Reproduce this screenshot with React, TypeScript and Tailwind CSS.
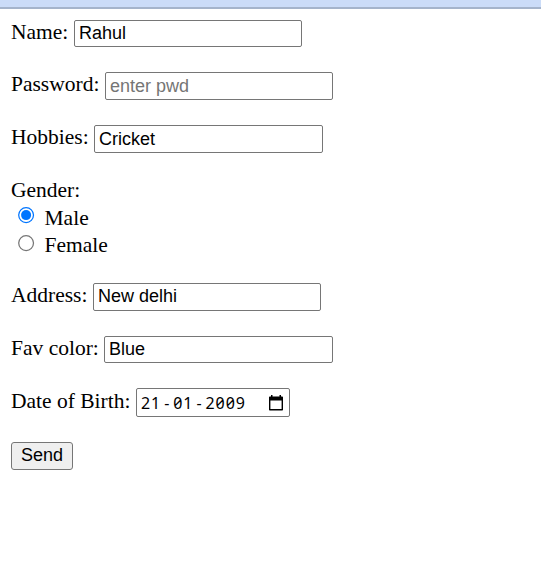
import React from 'react';

type FieldProps = {
  label: string;
  labelClass: string;
  boxClass: string;
  value?: string;
  placeholder?: string;
};

const boxBase =
  "block shrink-0 rounded-[2px] border border-[#767676] bg-white pl-1 font-['Liberation_Sans',Arial,sans-serif] text-[18px] leading-[24px] text-black outline-none placeholder:text-[#757575] placeholder:opacity-100";

function Field({ label, labelClass, boxClass, value, placeholder }: FieldProps) {
  return (
    <label className="flex h-[28px] items-start">
      <span className={`shrink-0 whitespace-nowrap leading-[24px] ${labelClass}`}>{label}</span>
      <input className={`${boxBase} ${boxClass}`} defaultValue={value} placeholder={placeholder} />
    </label>
  );
}

function Radio({ label, checked }: { label: string; checked?: boolean }) {
  return (
    <div className="flex h-[27.5px] items-start pl-[7px]">
      <svg className="mt-[1.5px] shrink-0" width="17" height="17" viewBox="0 0 17 17">
        <circle cx="8.1" cy="8.1" r="7.4" fill="white" stroke={checked ? '#0075ff' : '#767676'} strokeWidth="1.25" />
        {checked && <circle cx="8.1" cy="8.1" r="5" fill="#0075ff" />}
      </svg>
      <span className="ml-[9.5px] leading-[24px]">{label}</span>
    </div>
  );
}

function CalendarIcon() {
  return (
    <svg width="14" height="16" viewBox="0 0 14 16" className="mr-[6px]">
      <path fill="#000" d="M2 0h1.5v1.5h7V0H12v1.5h1.2q.8 0 .8.8v12.4q0 .8-.8.8H.8q-.8 0-.8-.8V2.3q0-.8.8-.8H2zM1.4 5.5v8.6h11.2V5.5z" />
    </svg>
  );
}

export default function App() {
  return (
    <main className="h-[562px] w-[541px] overflow-hidden bg-white font-['Liberation_Serif','Times_New_Roman',serif] text-[21.5px] text-black">
      <div className="h-[9px] border-b-2 border-[#a5b4cb] bg-[#cbdcf8]" />
      <form className="flex flex-col pl-[11px] pt-[11px]" onSubmit={(e) => e.preventDefault()}>
        <Field label="Name:" value="Rahul" labelClass="w-[63px]" boxClass="h-[27px] w-[228px] pb-px" />
        <div className="h-[24px]" />
        <Field label="Password:" placeholder="enter pwd" labelClass="w-[94px]" boxClass="h-[28px] w-[228px]" />
        <div className="h-[25px]" />
        <Field label="Hobbies:" value="Cricket" labelClass="w-[83px]" boxClass="h-[28px] w-[229px]" />
        <div className="mt-[25px] h-[27.5px] leading-[24px]">Gender:</div>
        <Radio label="Male" checked />
        <Radio label="Female" />
        <div className="h-[22.5px]" />
        <Field label="Address:" value="New delhi" labelClass="w-[82px]" boxClass="h-[28px] w-[228px] pb-px" />
        <div className="h-[25px]" />
        <Field label="Fav color:" value="Blue" labelClass="w-[93px]" boxClass="h-[27px] w-[229px] pb-px" />
        <div className="h-[24px]" />
        <div className="flex h-[29px] items-start">
          <span className="w-[125px] shrink-0 whitespace-nowrap leading-[26px]">Date of Birth:</span>
          <div className="flex h-[29px] w-[154px] items-center justify-between rounded-[2px] border border-[#767676] bg-white pl-1">
            <span className="flex font-['Noto_Sans',sans-serif] text-[16px] leading-[26px] tracking-[0.95px] [font-feature-settings:'zero'_1]">
              <span>21</span>
              <span className="w-[12px] text-center">-</span>
              <span>01</span>
              <span className="w-[12px] text-center">-</span>
              <span>2009</span>
            </span>
            <CalendarIcon />
          </div>
        </div>
        <button className="mt-[25px] h-[28px] w-[62px] rounded-[3px] border border-[#767676] bg-[#efefef] pb-[2px] text-center font-['Liberation_Sans',Arial,sans-serif] text-[18px] leading-[24px]">
          Send
        </button>
      </form>
    </main>
  );
}
